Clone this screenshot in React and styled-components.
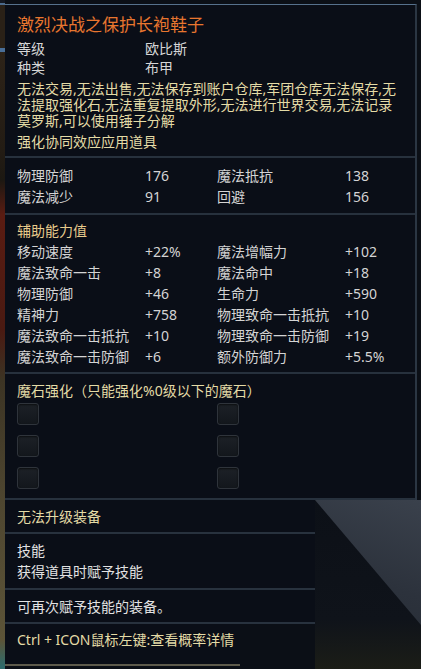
import React from 'react';
import styled, { createGlobalStyle } from 'styled-components';

const GlobalStyle = createGlobalStyle`
    html, body {
        margin: 0;
        padding: 0;
        background: #0b0f16;
    }
    body {
        font-family: "Noto Sans", "Noto Sans CJK SC", sans-serif;
    }
`;

const Page = styled.div`
    width: 421px;
    height: 669px;
    overflow: hidden;
    box-sizing: border-box;
    padding: 4px 0 0 5px;
    display: flex;
    flex-direction: column;
    background:
        linear-gradient(
                to bottom,
                #151922 0,
                #151922 3px,
                #4b6a8c 3px,
                #4b6a8c 5px,
                #2a2117 5px,
                #2a2117 48px,
                #4a6f98 48px,
                #4a6f98 52px,
                #2d2318 52px,
                #231c14 150px,
                #1c1812 180px,
                #5a1c12 215px,
                #4a1a12 330px,
                #3c3424 380px,
                #4e4630 500px,
                #5c5438 640px,
                #2f6a6a 666px
            )
            left top / 5px 100% no-repeat,
        #0b0f16;
`;

const Panel = styled.div`
    width: 412px;
    box-sizing: border-box;
    background: #0a0e17;
    border-top: 1px solid #56718c;
    border-right: 2px solid #2b3643;
`;

const Section = styled.section`
    padding: ${(props) => props.$pad || '6px 16px 6px 12px'};
    border-bottom: 2px solid #27313d;
`;

const Title = styled.h1`
    margin: 0 0 3px;
    font-size: 17px;
    font-weight: normal;
    line-height: 22px;
    color: #e8762f;
`;

const InfoRow = styled.div`
    display: grid;
    grid-template-columns: 128px auto;
    font-size: 14px;
    line-height: 19px;
    color: #d6d6d6;
`;

const Notice = styled.p`
    margin: ${(props) => props.$margin || '0'};
    font-size: 14px;
    line-height: ${(props) => props.$lh || '20px'};
    color: ${(props) => (props.$white ? '#e2e2e2' : '#e4dba6')};
`;

const Heading = styled.p`
    margin: 0;
    font-size: 14px;
    line-height: ${(props) => props.$lh || '21px'};
    color: #e8cb8c;
`;

const StatRow = styled.div`
    display: grid;
    grid-template-columns: 128px 72px 128px auto;
    font-size: 14px;
    line-height: ${(props) => props.$lh || '21px'};
    color: #d4d4d4;
    white-space: nowrap;
`;

const SlotGrid = styled.div`
    margin-top: 2px;
    display: grid;
    grid-template-columns: 200px 200px;
    row-gap: 10px;
`;

const Slot = styled.div`
    width: 22px;
    height: 22px;
    box-sizing: border-box;
    border: 1px solid #2f343b;
    border-radius: 3px;
    background: linear-gradient(to bottom, #1d2127, #13171c);
    box-shadow: inset 0 1px 2px rgba(0, 0, 0, 0.6);
`;

const Lower = styled.div`
    flex: 1;
    display: flex;
`;

const LowerColumn = styled.div`
    width: 310px;
    display: flex;
    flex-direction: column;
    align-items: flex-start;
`;

const LowerSection = styled.section`
    width: ${(props) => (props.$narrow ? '235px' : '310px')};
    box-sizing: border-box;
    padding: ${(props) => props.$pad || '7px 0 5px 12px'};
    background: #0a0e17;
    border-bottom: 2px solid ${(props) => (props.$last ? '#5e5b4c' : '#28323e')};
`;

const Backdrop = styled.div`
    flex: 1;
    position: relative;
    background: linear-gradient(to bottom, #0c1017 0%, #0f131a 70%, #1b1d17 100%);

    &::before {
        content: '';
        position: absolute;
        left: 0;
        top: 0;
        right: 0;
        height: 125px;
        background: linear-gradient(200deg, #3a414c 0%, #2c323c 60%, #272d36 100%);
        clip-path: polygon(0 0, 100% 0, 100% 100%);
    }
`;

const baseStats = [
    ['物理防御', '176', '魔法抵抗', '138'],
    ['魔法减少', '91', '回避', '156'],
];

const bonusStats = [
    ['移动速度', '+22%', '魔法增幅力', '+102'],
    ['魔法致命一击', '+8', '魔法命中', '+18'],
    ['物理防御', '+46', '生命力', '+590'],
    ['精神力', '+758', '物理致命一击抵抗', '+10'],
    ['魔法致命一击抵抗', '+10', '物理致命一击防御', '+19'],
    ['魔法致命一击防御', '+6', '额外防御力', '+5.5%'],
];

const App = () => {
    return (
        <>
            <GlobalStyle />
            <Page>
                <Panel>
                    <Section $pad="9px 16px 5px 12px">
                        <Title>激烈决战之保护长袍鞋子</Title>
                        <InfoRow>
                            <span>等级</span>
                            <span>欧比斯</span>
                        </InfoRow>
                        <InfoRow>
                            <span>种类</span>
                            <span>布甲</span>
                        </InfoRow>
                        <Notice $margin="4px 0 0" $lh="16px">
                            无法交易,无法出售,无法保存到账户仓库,军团仓库无法保存,无法提取强化石,无法重复提取外形,无法进行世界交易,无法记录莫罗斯,可以使用锤子分解
                        </Notice>
                        <Notice $margin="4px 0 0" $lh="18px">
                            强化协同效应应用道具
                        </Notice>
                    </Section>
                    <Section $pad="7px 16px 6px 12px">
                        {baseStats.map((row) => (
                            <StatRow key={row[0]}>
                                {row.map((cell, i) => (
                                    <span key={i}>{cell}</span>
                                ))}
                            </StatRow>
                        ))}
                    </Section>
                    <Section $pad="5px 16px 5px 12px">
                        <Heading>辅助能力值</Heading>
                        {bonusStats.map((row) => (
                            <StatRow key={row[0] + row[2]}>
                                {row.map((cell, i) => (
                                    <span key={i}>{cell}</span>
                                ))}
                            </StatRow>
                        ))}
                    </Section>
                    <Section $pad="7px 16px 9px 12px">
                        <Notice>魔石强化（只能强化%0级以下的魔石）</Notice>
                        <SlotGrid>
                            {[0, 1, 2, 3, 4, 5].map((n) => (
                                <Slot key={n} />
                            ))}
                        </SlotGrid>
                    </Section>
                </Panel>
                <Lower>
                    <LowerColumn>
                        <LowerSection>
                            <Notice>无法升级装备</Notice>
                        </LowerSection>
                        <LowerSection $pad="6px 0 6px 12px">
                            <Notice $white $lh="21px">
                                技能
                            </Notice>
                            <Notice $white $lh="21px">
                                获得道具时赋予技能
                            </Notice>
                        </LowerSection>
                        <LowerSection>
                            <Notice $white>可再次赋予技能的装备。</Notice>
                        </LowerSection>
                        <LowerSection $narrow $last $pad="6px 0 14px 12px">
                            <Notice>Ctrl + ICON鼠标左键:查看概率详情</Notice>
                        </LowerSection>
                    </LowerColumn>
                    <Backdrop />
                </Lower>
            </Page>
        </>
    );
};

export default App;
